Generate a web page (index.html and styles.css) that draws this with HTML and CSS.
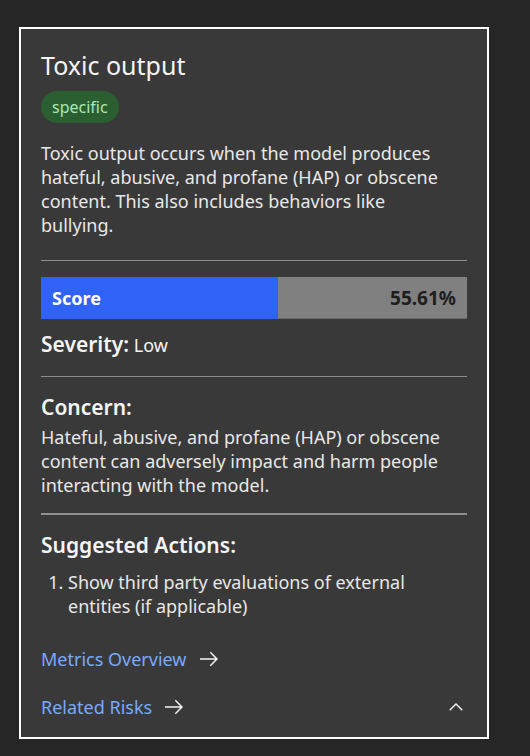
FILE: index.html
```html
<!DOCTYPE html>
<html lang="en">
<head>
<meta charset="utf-8">
<title>Toxic output</title>
<link rel="stylesheet" href="styles.css">
</head>
<body>
<div class="page">
  <section class="card">
    <header class="card-header">
      <h1 class="title">Toxic output</h1>
      <span class="tag">specific</span>
    </header>
    <p class="desc">Toxic output occurs when the model produces hateful, abusive, and profane (HAP) or obscene content. This also includes behaviors like bullying.</p>
    <hr class="rule rule-a">
    <div class="score">
      <div class="score-fill" style="width:55.61%"><span class="score-label">Score</span></div>
      <span class="score-value">55.61%</span>
    </div>
    <p class="severity"><strong>Severity:</strong> Low</p>
    <hr class="rule rule-b">
    <h2 class="heading heading-concern">Concern:</h2>
    <p class="body-text">Hateful, abusive, and profane (HAP) or obscene content can adversely impact and harm people interacting with the model.</p>
    <hr class="rule rule-thick">
    <h2 class="heading heading-actions">Suggested Actions:</h2>
    <ol class="actions">
      <li>Show third party evaluations of external entities (if applicable)</li>
    </ol>
    <a class="link link-metrics" href="#">Metrics Overview
      <svg class="arrow" width="20" height="20" viewBox="0 0 20 20" aria-hidden="true"><path d="M11.8 2.8 10.8 3.8 16.2 9.3 1 9.3 1 10.7 16.2 10.7 10.8 16.2 11.8 17.2 19 10z"/></svg>
    </a>
    <div class="footer-row">
      <a class="link" href="#">Related Risks
        <svg class="arrow" width="20" height="20" viewBox="0 0 20 20" aria-hidden="true"><path d="M11.8 2.8 10.8 3.8 16.2 9.3 1 9.3 1 10.7 16.2 10.7 10.8 16.2 11.8 17.2 19 10z"/></svg>
      </a>
      <svg class="chevron" width="14" height="8" viewBox="0 0 14 8" aria-hidden="true"><polyline points="0.7,7.3 7,1 13.3,7.3"/></svg>
    </div>
  </section>
</div>
</body>
</html>
```
FILE: styles.css
```css
html, body {
  margin: 0;
  padding: 0;
  background: #262626;
}
body {
  font-family: "Noto Sans", "DejaVu Sans", sans-serif;
  color: #f4f4f4;
  font-size: 18px;
  line-height: 24px;
}
.page {
  padding: 27px 0 0 19px;
}
.card {
  box-sizing: border-box;
  width: 470px;
  background: #393939;
  border: 2px solid #ffffff;
  padding: 20px 20px 18px 20px;
}
.card-header {
  display: flex;
  flex-direction: column;
  align-items: flex-start;
}
.title {
  margin: 0;
  font-size: 25px;
  line-height: 32px;
  font-weight: 400;
  color: #f4f4f4;
}
.tag {
  margin-top: 10px;
  display: inline-flex;
  align-items: center;
  height: 32px;
  padding: 0 11px;
  border-radius: 16px;
  background: #2b5e30;
  color: #a8e8b6;
  font-size: 16px;
  line-height: 20px;
}
.desc {
  margin: 18px 0 0 0;
  padding-right: 14px;
  color: #e8e8e8;
}
.rule {
  border: 0;
  height: 1px;
  background: #8d8d8d;
  margin: 0;
}
.rule-a { margin-top: 23px; }
.rule-b { margin-top: 17px; }
.rule-thick {
  height: 2px;
  margin-top: 16px;
  background: #8f8f8f;
}
.score {
  margin-top: 16px;
  display: flex;
  align-items: center;
  height: 42px;
  background: #808080;
  box-shadow: inset 0 -1px 0 #6a6a6a;
}
.score-fill {
  height: 100%;
  background: #2f62f5;
  display: flex;
  align-items: center;
  box-sizing: border-box;
  padding-left: 11px;
}
.score-label {
  font-weight: 700;
  color: #ffffff;
  font-size: 18px;
}
.score-value {
  margin-left: auto;
  padding-right: 11px;
  font-weight: 700;
  font-size: 19px;
  color: #1e1e1e;
}
.severity {
  margin: 11px 0 0 0;
  line-height: 28px;
  color: #f4f4f4;
}
.severity strong {
  font-size: 21px;
  font-weight: 600;
}
.heading {
  margin: 0;
  font-size: 21px;
  line-height: 28px;
  font-weight: 600;
  color: #f4f4f4;
}
.heading-concern { margin-top: 16px; }
.heading-actions { margin-top: 16px; }
.body-text {
  margin: 4px 0 0 0;
  color: #e8e8e8;
}
.actions {
  margin: 11px 0 0 0;
  padding-left: 27px;
  color: #e8e8e8;
}
.link {
  display: inline-flex;
  align-items: center;
  gap: 12px;
  color: #78a9ff;
  text-decoration: none;
  line-height: 24px;
}
.link-metrics {
  margin-top: 29px;
}
.arrow {
  fill: #f4f4f4;
  display: block;
}
.footer-row {
  margin-top: 24px;
  display: flex;
  align-items: center;
  justify-content: space-between;
}
.chevron {
  display: block;
  fill: none;
  stroke: #f4f4f4;
  stroke-width: 1.4;
  margin-right: 4px;
}
```
